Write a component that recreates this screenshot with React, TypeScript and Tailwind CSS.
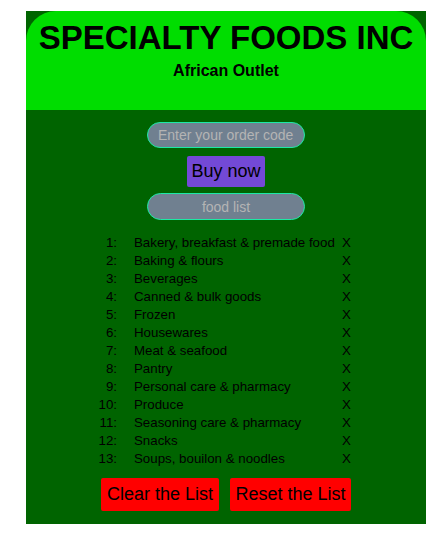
import React from "react";

const items = [
  "Bakery, breakfast & premade food",
  "Baking & flours",
  "Beverages",
  "Canned & bulk goods",
  "Frozen",
  "Housewares",
  "Meat & seafood",
  "Pantry",
  "Personal care & pharmacy",
  "Produce",
  "Seasoning care & pharmacy",
  "Snacks",
  "Soups, bouilon & noodles",
];

export default function App() {
  return (
    <div className="min-h-[541px] bg-white pt-[11px]" style={{ fontFamily: '"Liberation Sans", Arial, sans-serif' }}>
      <div className="ml-[26px] w-[400px] bg-[#006400]">
        <div className="h-[99px] rounded-t-[30px] bg-[#00dd00] pt-[8px] text-center text-black">
          <h1 className="text-[33px] font-bold leading-[38px]">SPECIALTY FOODS INC</h1>
          <h2 className="mt-[5px] text-[16px] font-bold leading-[18px]">African Outlet</h2>
        </div>
        <div className="flex flex-col items-center pt-[12px] pb-[13px]">
          <input
            className="h-[26px] w-[158px] rounded-full border border-[#1de9a5] bg-[#708090] px-[10px] text-[14px] text-[#c0c0c0] placeholder:text-[#b4b4b4] outline-none"
            placeholder="Enter your order code"
          />
          <button className="mt-[8px] h-[31px] w-[78px] rounded-[2px] bg-[#7349d6] text-[18px] text-black">
            Buy now
          </button>
          <input
            className="mt-[6px] h-[27px] w-[158px] rounded-full border border-[#1de9a5] bg-[#708090] px-[10px] text-center text-[14px] text-[#c0c0c0] placeholder:text-[#b4b4b4] outline-none"
            placeholder="food list"
          />
          <div className="mt-[14px] w-full text-[13.3px] text-black">
            {items.map((it, i) => (
              <div key={i} className="flex h-[18px] items-center whitespace-nowrap pl-[64px] leading-[18px]">
                <span className="w-[27px] shrink-0 text-right">{i + 1}:</span>
                <span className="ml-[17px] w-[208px] shrink-0">{it}</span>
                <span>X</span>
              </div>
            ))}
          </div>
          <div className="mt-[10px] flex gap-[11px]">
            <button className="h-[33px] w-[118px] rounded-[2px] bg-[#ff0000] text-[18px] text-black">
              Clear the List
            </button>
            <button className="h-[33px] w-[121px] rounded-[2px] bg-[#ff0000] text-[18px] text-black">
              Reset the List
            </button>
          </div>
        </div>
      </div>
    </div>
  );
}
